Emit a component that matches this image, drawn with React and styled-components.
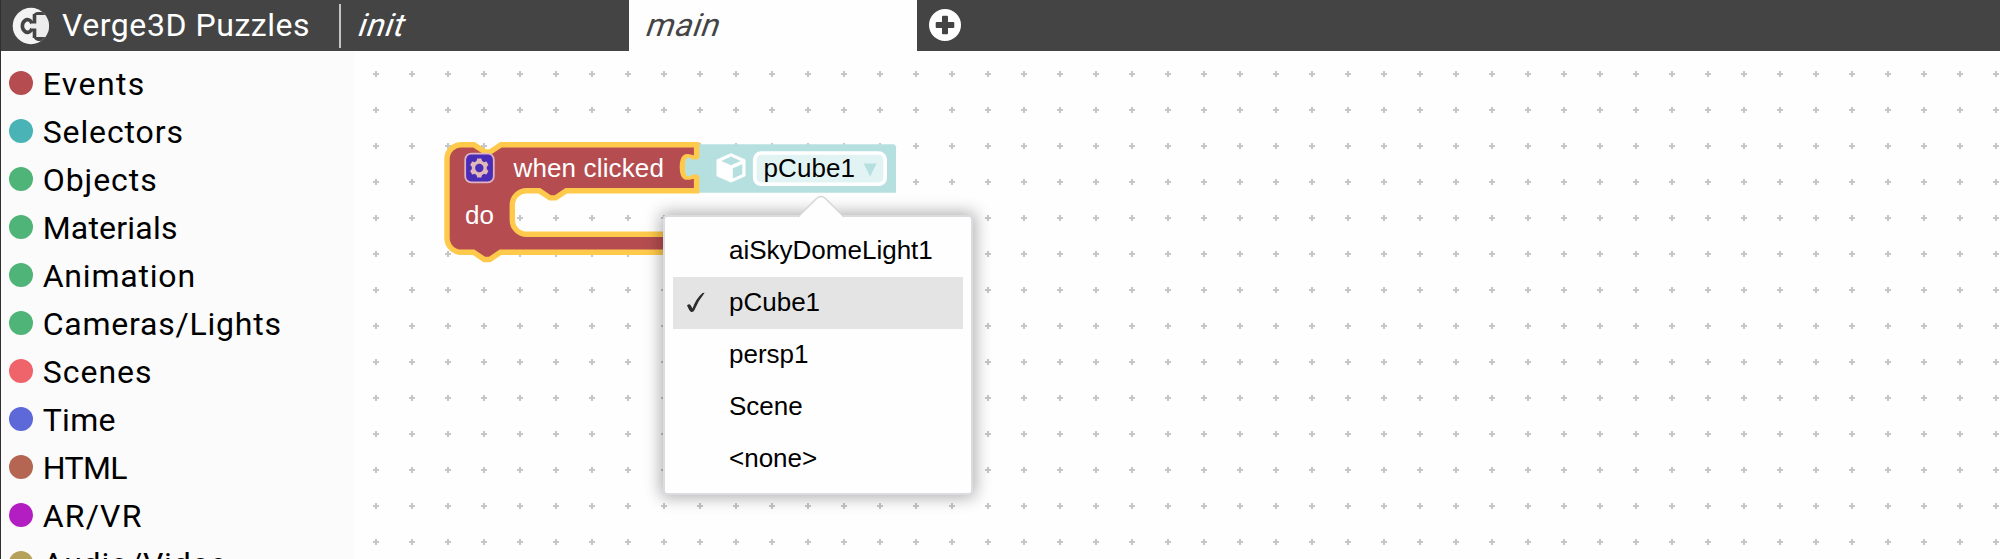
import React from "react";
import styled, { createGlobalStyle } from "styled-components";

const Global = createGlobalStyle`
  * { box-sizing: border-box; }
  body { margin: 0; background: #fefefe; overflow: hidden; }
`;

const Page = styled.div`
  width: 2000px;
  height: 559px;
  display: flex;
  flex-direction: column;
  overflow: hidden;
  border-left: 1px solid #303030;
  font-family: Roboto, sans-serif;
`;

const Header = styled.header`
  height: 51px;
  flex: none;
  display: flex;
  align-items: center;
  background: #444;
  color: #fff;
`;

const Brand = styled.div`
  width: 340px;
  height: 44px;
  padding-left: 11px;
  display: flex;
  align-items: center;
  gap: 13px;
  border-right: 2px solid #c4c4c4;
  white-space: nowrap;
`;

const Title = styled.span`
  font-size: 32px;
  line-height: 42px;
  padding-bottom: 2px;
  letter-spacing: 0.55px;
`;

const Tab = styled.div`
  width: 288px;
  height: 51px;
  padding-left: 15px;
  background: ${(p) => (p.$active ? "#fefefe" : "#444")};
  color: ${(p) => (p.$active ? "#444" : "#fff")};
`;

const TabName = styled.span`
  display: inline-block;
  font-size: 32px;
  line-height: 50px;
  letter-spacing: 0.6px;
  transform: skewX(-19deg);
  transform-origin: 0 36px;
`;

const AddTab = styled.div`
  display: flex;
  padding: 0 0 1px 12px;
`;

const Body = styled.div`
  flex: 1;
  min-height: 0;
  display: flex;
`;

const Toolbox = styled.nav`
  width: 353px;
  flex: none;
  padding: 8px 0 0 8px;
  background: #fbfbfb;
  overflow: hidden;
`;

const Category = styled.div`
  height: 48px;
  display: flex;
  align-items: center;
  gap: 9.7px;
  color: #000;
  font-size: 32px;
  letter-spacing: ${(p) => p.$spacing}px;
  white-space: nowrap;
`;

const Dot = styled.span`
  width: 24px;
  height: 24px;
  flex: none;
  border-radius: 50%;
  background: ${(p) => p.$color};
`;

const Label = styled.span`
  line-height: 46px;
  padding-top: 2px;
`;

const Workspace = styled.main`
  flex: 1;
  position: relative;
  overflow: hidden;
`;

const Canvas = styled.svg`
  display: block;
`;

const BlockText = styled.text`
  font: 26px "Liberation Sans", Arial, sans-serif;
  letter-spacing: ${(p) => p.$spacing || 0}px;
  fill: ${(p) => p.$color || "#fff"};
`;

const Menu = styled.div`
  position: absolute;
  left: 309px;
  top: 164px;
  width: 310px;
  height: 280px;
  padding: 8px;
  background: #fefefe;
  border: 2px solid #dadce0;
  border-radius: 4px;
  box-shadow: 0 0 16px 3px rgba(0, 0, 0, 0.3);
`;

const MenuArrow = styled.svg`
  position: absolute;
  left: 132.5px;
  top: -22px;
`;

const MenuItem = styled.div`
  height: 52px;
  display: flex;
  color: #000;
  background: ${(p) => (p.$selected ? "#e4e4e4" : "transparent")};
  font: 26px/50px "Liberation Sans", Arial, sans-serif;
`;

const CheckSlot = styled.span`
  width: 56px;
  height: 50px;
  padding-left: 13px;
  display: flex;
  align-items: center;
`;

const categories = [
  ["Events", "#b54d50", 1.4],
  ["Selectors", "#49b3b5", 0.88],
  ["Objects", "#4fb477", 0.95],
  ["Materials", "#4fb477", 0.2],
  ["Animation", "#4fb477", 0.8],
  ["Cameras/Lights", "#4fb477", 0.78],
  ["Scenes", "#ee646a", 1],
  ["Time", "#5d68d9", 0.3],
  ["HTML", "#b46653", -0.6],
  ["AR/VR", "#b31ec2", 1.2],
  ["Audio/Video", "#b5a15a", 0.77],
];

const Logo = () => (
  <svg width="37" height="38" viewBox="12 6 37 38">
    <defs>
      <clipPath id="disc"><circle cx="30.900" cy="25" r="18.200" /></clipPath>
    </defs>
    <g clipPath="url(#disc)">
      <rect x="12" y="6" width="38" height="38" fill="#f3f3f3" />
      <path d="M33 15Q34 11 38 11H50V40H38Q33.500 39 33 34z" fill="#444" />
      <path
        d="M34.500 13V19.500Q34 22 31.500 21.500C30 18.500 27 18 25 19.500C21.500 22 21.500 28 25 30.500C27 32 30 31.500 31.500 28.500Q34 28 34.500 30.500V37"
        fill="none" stroke="#444" strokeWidth="3.600"
      />
      <path d="M36.300 14H46L49.500 22V28L46 36H36.300V27.500H31V22.500H36.300z" fill="#ececec" />
    </g>
  </svg>
);

const AddIcon = () => (
  <svg width="32" height="32" viewBox="0 0 32 32">
    <circle cx="16" cy="16" r="16" fill="#fff" />
    <rect x="6.700" y="13" width="18.600" height="6" rx="1" fill="#444" />
    <rect x="13" y="6.700" width="6" height="18.600" rx="1" fill="#444" />
  </svg>
);

const Check = () => (
  <svg width="20" height="21" viewBox="0 0 20 21">
    <path d="M1 13.500Q3 11.500 4.500 13L6.500 16.500Q10 6.500 16.500 1L18.700 .8Q12 9 8.500 18Q7.500 20.500 5 20Q3 18.500 1 13.500z" fill="#2c2c2c" />
  </svg>
);

const Gear = () => (
  <g transform="translate(479.300 168)">
    <rect x="-14.100" y="-14.300" width="28.600" height="28.600" rx="6" fill="#4a2cb6" stroke="#dfb3bf" strokeWidth="1.800" />
    <circle r="5.900" fill="none" stroke="#e1b8b9" strokeWidth="3.400" />
    {[0, 60, 120, 180, 240, 300].map((a) => (
      <path key={a} d="M-2.900-6.500L-2-9.400H2L2.900-6.500z" fill="#e1b8b9" transform={`rotate(${a})`} />
    ))}
  </g>
);

const Cube = () => (
  <g>
    <path d="M731 153.500L745.200 159.800V176L731 182.200L716.800 176V159.800z" fill="#fff" stroke="#fff" strokeWidth=".6" strokeLinejoin="round" />
    <path d="M731 156.600L740.800 161L731 165.300L721.200 161z" fill="#b6e0e0" />
    <path d="M732.800 168.300L742.300 164.200V174.200L732.800 178.400z" fill="#b6e0e0" />
  </g>
);

const Blocks = () => (
  <Canvas width="1646" height="508" viewBox="354 51 1646 508">
    <defs>
      <pattern id="grid" width="36" height="36" patternUnits="userSpaceOnUse" x="358" y="56">
        <path d="M15 18h6M18 15v6" stroke="#c6c6c6" strokeWidth="2" />
      </pattern>
    </defs>
    <rect x="354" y="51" width="1646" height="508" fill="url(#grid)" />
    <path d="M684 144.300H894L896 146.300V192.800H684z" fill="#b6e0e0" />
    <path
      d="M461.400 144.700H474l10.800 7.200h5.400l10.800-7.200H696.600v12.500c-4 3.500-14.200-8-14.200 9.800s10.200 6.200 14.200 9.800V190.700H566.300l-10.800 7.200h-5.400l-10.800-7.200H526.700a14.400 14.400 0 0 0-14.400 14.400v14.800a14.400 14.400 0 0 0 14.400 14.400H696.600V252.300H500.500l-10.800 7.200h-5.400l-10.800-7.200H461.400a14.400 14.400 0 0 1-14.400-14.400V159.100a14.400 14.400 0 0 1 14.400-14.400z"
      fill="#b54d50" stroke="#ffca4b" strokeWidth="5.400"
    />
    <path d="M701 156.500L696.600 159.800Q692.500 160 689 157.600Q685 156.500 685 167T689 176.400Q692.500 174 696.600 174.200L701 177.500z" fill="#b6e0e0" />
    <Gear />
    <BlockText x="513.500" y="176.700" $spacing={0.14}>when clicked</BlockText>
    <BlockText x="465" y="223.700">do</BlockText>
    <Cube />
    <rect x="754.700" y="153" width="130.500" height="31.300" rx="6.500" fill="#e2f3f3" stroke="#fff" strokeWidth="3.600" />
    <BlockText x="763.500" y="176.700" $color="#000" $spacing={0.1}>pCube1</BlockText>
    <path d="M863.600 163.400H876.600L870.100 176.600z" fill="#b6e0e0" />
  </Canvas>
);

const options = ["aiSkyDomeLight1", "pCube1", "persp1", "Scene", "<none>"];

export default function App() {
  return (
    <>
      <Global />
      <Page>
        <Header>
          <Brand><Logo /><Title>Verge3D Puzzles</Title></Brand>
          <Tab><TabName>init</TabName></Tab>
          <Tab $active><TabName>main</TabName></Tab>
          <AddTab><AddIcon /></AddTab>
        </Header>
        <Body>
          <Toolbox>
            {categories.map(([name, color, spacing]) => (
              <Category key={name} $spacing={spacing}><Dot $color={color} /><Label>{name}</Label></Category>
            ))}
          </Toolbox>
          <Workspace>
            <Blocks />
            <Menu>
              <MenuArrow width="46" height="24" viewBox="0 0 46 24">
                <path d="M0 22L18 4Q23 -1 28 4L46 22V24H0z" fill="#fefefe" />
                <path d="M0 22L18 4Q23 -1 28 4L46 22" fill="none" stroke="#d4d6da" strokeWidth="1.500" />
              </MenuArrow>
              {options.map((name) => (
                <MenuItem key={name} $selected={name === "pCube1"}>
                  <CheckSlot>{name === "pCube1" && <Check />}</CheckSlot>
                  {name}
                </MenuItem>
              ))}
            </Menu>
          </Workspace>
        </Body>
      </Page>
    </>
  );
}
